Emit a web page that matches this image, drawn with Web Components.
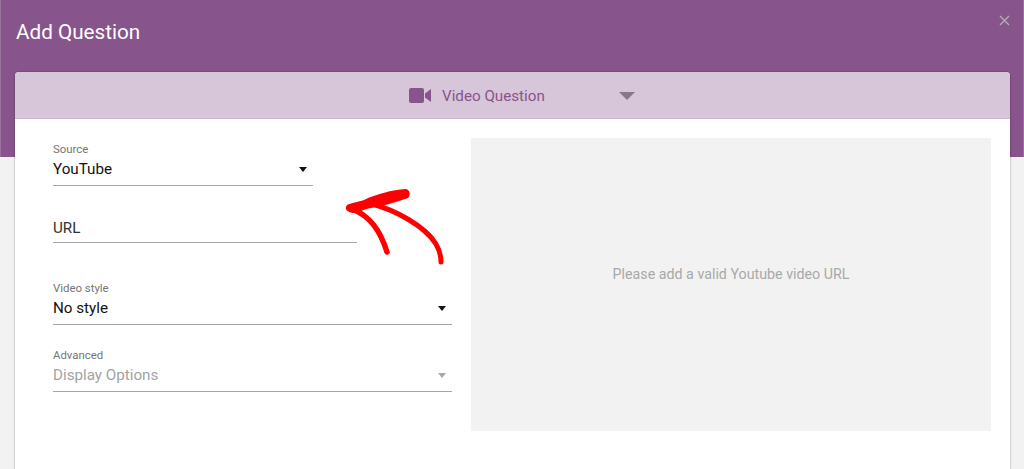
<!DOCTYPE html>
<html>
<head>
<meta charset="utf-8">
<style>
  html, body { margin: 0; height: 469px; overflow: hidden; background: #f2f2f2; }
  body { font-family: Roboto, "Liberation Sans", sans-serif; }
</style>
</head>
<body>
<template id="select-tpl">
  <style>
    :host { display: block; box-sizing: border-box; height: 45px; border-bottom: 1px solid #a6a6a6; }
    .label { font-size: 11.4px; line-height: 16px; height: 16px; color: #757575; }
    .row { display: flex; align-items: center; justify-content: space-between; padding-top: 1px; height: 22px; }
    .value { font-size: 15.2px; line-height: 22px; color: #111; }
    .caret { width: 0; height: 0; border-left: 4px solid transparent; border-right: 4px solid transparent; border-top: 5px solid #111; margin-right: 6px; }
    :host([disabled]) .value { color: #a3a3a3; }
    :host([disabled]) .caret { border-top-color: #a8a8a8; }
  </style>
  <div class="label"><slot name="label"></slot></div>
  <div class="row"><span class="value"><slot></slot></span><span class="caret"></span></div>
</template>

<template id="dialog-tpl">
  <style>
    :host { display: block; height: 469px; position: relative; }
    .band { height: 157px; background: #87548b; border-left: 1px solid #9a739d; border-right: 1px solid #9a739d; box-sizing: border-box; margin-bottom: -157px; }
    .top { position: relative; height: 72px; box-sizing: border-box; padding: 19px 0 0 16px; color: #fff; font-size: 20.7px; line-height: 26px; }
    .close { position: absolute; top: 14px; right: 13px; width: 13px; height: 13px; }
    .sheet { position: relative; margin: 0 14px 0 15px; height: 397px; background: #fff; border-radius: 4px 4px 0 0; box-shadow: 0 0 0 1px rgba(0,0,0,.08), 0 1px 3px rgba(0,0,0,.14); overflow: hidden; }
  </style>
  <div class="band"></div>
  <div class="top"><slot name="title"></slot>
    <svg class="close" viewBox="0 0 13 13"><path d="M2 2l9 9M11 2l-9 9" stroke="#aeb0b2" stroke-width="1.4" fill="none"/></svg>
  </div>
  <div class="sheet"><slot></slot></div>
</template>

<template id="type-tpl">
  <style>
    :host { display: block; height: 47px; background: #d7c5d9; border-bottom: 1px solid #cdb6cf; box-sizing: border-box; }
    .wrap { display: flex; align-items: center; height: 47px; padding-left: 394px; color: #87548b; font-size: 15.2px; }
    svg { width: 22px; height: 15px; margin-right: 11px; }
    .caret { width: 0; height: 0; border-left: 8.500px solid transparent; border-right: 8.500px solid transparent; border-top: 8px solid #86788a; margin-left: 74px; }
  </style>
  <div class="wrap">
    <svg viewBox="0 0 22 15"><rect x="0" y="0" width="15" height="15" rx="2" fill="#87548b"/><path d="M16 5.500L22 1v13l-6-4.500z" fill="#87548b"/></svg>
    <span><slot></slot></span>
    <span class="caret"></span>
  </div>
</template>

<template id="form-tpl">
  <style>
    :host { display: flex; gap: 19px; padding: 19px 19px 0 38px; box-sizing: border-box; height: 330px; }
    .fields { width: 399px; padding-top: 3px; display: flex; flex-direction: column; }
    .preview { box-sizing: border-box; width: 520px; height: 293px; padding-bottom: 21px; background: #f2f2f2; display: flex; align-items: center; justify-content: center; color: #a9a9a9; font-size: 14.25px; }
  </style>
  <div class="fields"><slot></slot></div>
  <div class="preview"><slot name="preview"></slot></div>
</template>

<template id="url-tpl">
  <style>
    :host { display: block; box-sizing: border-box; border-bottom: 1px solid #a6a6a6; color: #333; font-size: 15.2px; line-height: 22px; height: 26px; }
  </style>
  <slot></slot>
</template>

<q-dialog>
  <span slot="title">Add Question</span>
  <q-type>Video Question</q-type>
  <q-form>
    <q-select style="width:260px;margin-bottom:31px"><span slot="label">Source</span>YouTube</q-select>
    <q-url style="width:304px;margin-bottom:37px">URL</q-url>
    <q-select style="margin-bottom:22px"><span slot="label">Video style</span>No style</q-select>
    <q-select disabled><span slot="label">Advanced</span>Display Options</q-select>
    <span slot="preview">Please add a valid Youtube video URL</span>
  </q-form>
</q-dialog>
<svg style="position:absolute;left:0;top:0;pointer-events:none" width="1024" height="469" viewBox="0 0 1024 469">
  <path d="M406 189C392 190 376 194 364 200C358 202 351 203 347 205C344 209 347 212 353 213C358 213 364 209 371 208C384 206 396 202 408 198C411 195 410 190 406 189Z" fill="#fe0000"/>
  <path d="M352 209C370 216 380 230 387 252" stroke="#fe0000" stroke-width="5.500" stroke-linecap="round" fill="none"/>
  <path d="M372 204C395 210 425 226 436 244C440 251 441 256 441 262" stroke="#fe0000" stroke-width="5" stroke-linecap="round" fill="none"/>
</svg>
<script>
  function reg(name, tpl) {
    customElements.define(name, class extends HTMLElement {
      constructor() {
        super();
        this.attachShadow({ mode: 'open' }).appendChild(document.getElementById(tpl).content.cloneNode(true));
      }
    });
  }
  reg('q-select', 'select-tpl');
  reg('q-dialog', 'dialog-tpl');
  reg('q-type', 'type-tpl');
  reg('q-form', 'form-tpl');
  reg('q-url', 'url-tpl');
</script>
</body>
</html>
